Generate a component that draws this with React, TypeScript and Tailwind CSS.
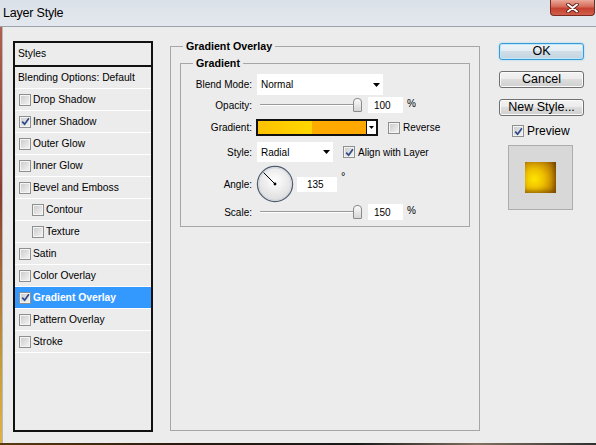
import React from 'react'
import clsx from 'clsx'

const styleRows = [
  { label: 'Drop Shadow' },
  { label: 'Inner Shadow', checked: true },
  { label: 'Outer Glow' },
  { label: 'Inner Glow' },
  { label: 'Bevel and Emboss' },
  { label: 'Contour', nested: true },
  { label: 'Texture', nested: true },
  { label: 'Satin' },
  { label: 'Color Overlay' },
  { label: 'Gradient Overlay', checked: true, active: true },
  { label: 'Pattern Overlay' },
  { label: 'Stroke' },
]

function Check({ checked = false }: { checked?: boolean }) {
  return (
    <span className="flex items-center justify-center w-[12px] h-[12px] shrink-0 border border-[#8e8f8f] bg-[linear-gradient(135deg,#c9c9c9,#f5f5f5)] shadow-[inset_0_0_0_1px_#f4f4f4]">
      {checked && (
        <svg width="9" height="9" viewBox="0 0 10 10">
          <path d="M1.3 5.2 L4 8 L8.8 1.4" stroke="#2f4a8a" strokeWidth="1.9" fill="none" />
        </svg>
      )}
    </span>
  )
}

function Arrow() {
  return (
    <svg width="7" height="4" viewBox="0 0 7 4">
      <path d="M0 0H7L3.5 4Z" fill="#000" />
    </svg>
  )
}

function Slider() {
  return (
    <div className="relative w-[105px] h-full">
      <div className="absolute left-[3px] right-[5px] top-[7px] h-[2px] border-t border-[#9a9a9a] border-b border-b-white" />
      <div className="absolute left-[96px] top-[1px] w-[9px] h-[14px] rounded-t-[4px] rounded-b-[1px] border border-[#8a8a8a] bg-[linear-gradient(#fbfbfb,#d6d6d6)]" />
    </div>
  )
}

function Label({ children }: { children: React.ReactNode }) {
  return <span className="w-[76px] shrink-0 text-right pr-[5px]">{children}</span>
}

function Button({ children, primary = false }: { children: React.ReactNode; primary?: boolean }) {
  return (
    <div
      className={clsx(
        'h-[17px] flex items-center justify-center rounded-[3px] border text-[12.5px] leading-none',
        primary
          ? 'border-[#3a9ad6] bg-[linear-gradient(#eef5f9,#e2ecf2_50%,#cfdde7_50%,#c3d5e1)] shadow-[0_0_2px_#7fd0f6,inset_0_0_0_1px_#bfe6fb]'
          : 'border-[#707070] bg-[linear-gradient(#f3f3f3,#ebebeb_50%,#dddddd_50%,#cfcfcf)] shadow-[inset_0_0_0_1px_#fbfbfb]'
      )}
    >
      {children}
    </div>
  )
}

export default function App() {
  return (
    <div className="w-[596px] h-[445px] flex flex-col overflow-hidden font-['Liberation_Sans',Arial,sans-serif] text-black">
      {/* title bar */}
      <div className="h-[26px] flex justify-between bg-[linear-gradient(#dbe1e8,#e3e8ee)] border-b border-[#9ca3ab] box-content">
        <span className="self-center pl-[3px] text-[12.5px] tracking-[-0.2px]">Layer Style</span>
        <div className="self-start mr-[1px] w-[45px] h-[16px] rounded-b-[4px] border border-t-0 border-[#7a2a20] bg-[linear-gradient(#e9a898,#d66a58_45%,#c5402f_55%,#d0604c)] flex items-center justify-center">
          <svg width="13" height="10" viewBox="0 0 13 10">
            <path d="M2 1.5 L11 8.5 M11 1.5 L2 8.5" stroke="#5a1c14" strokeWidth="3.6" strokeLinecap="round" />
            <path d="M2 1.5 L11 8.5 M11 1.5 L2 8.5" stroke="#ffffff" strokeWidth="2" strokeLinecap="round" />
          </svg>
        </div>
      </div>

      {/* body */}
      <div className="flex h-[416px]">
        <div className="w-[2px] bg-[linear-gradient(180deg,#b06050,#8a3a30_40%,#c49a3a_80%,#e2b244)]" />
        <div className="flex-1 bg-[#ececec] border-l border-[#b9b9b9] flex items-start pt-[14px]">
          {/* styles list */}
          <div className="ml-[10px] w-[140px] h-[391px] border-2 border-[#111] text-[10.3px]">
            <div className="h-[22px] flex items-center pl-[3px]">Styles</div>
            <div className="h-[2px] bg-[#111]" />
            <div className="h-[22px] flex items-center pl-[3px] border-b border-white">Blending Options: Default</div>
            {styleRows.map(s => (
              <div
                key={s.label}
                className={clsx(
                  'h-[22px] flex items-center gap-[2px] border-b border-white',
                  s.nested ? 'pl-[17px]' : 'pl-[4px]',
                  s.active && 'bg-[#3399ff] text-white font-bold'
                )}
              >
                <Check checked={s.checked} />
                <span>{s.label}</span>
              </div>
            ))}
          </div>

          {/* gradient overlay */}
          <fieldset className="ml-[17px] -mt-[1px] w-[310px] h-[391px] border border-[#a6a6a6] text-[10px]">
            <legend className="ml-[12px] px-[3px] font-bold text-[10.7px] leading-[13px]">Gradient Overlay</legend>
            <fieldset className="mx-[9px] mt-[3.5px] border border-[#a6a6a6] pb-[6px]">
              <legend className="ml-[12px] px-[3px] font-bold text-[10.7px] leading-[13px]">Gradient</legend>

              <div className="flex items-center h-[21px] mt-[4.5px]">
                <Label>Blend Mode:</Label>
                <div className="w-[126px] h-full bg-white flex items-center justify-between pl-[4px] pr-[3px]">
                  <span>Normal</span>
                  <Arrow />
                </div>
              </div>

              <div className="flex items-center h-[16px] mt-[2px]">
                <Label>Opacity:</Label>
                <Slider />
                <div className="ml-[6px] w-[35px] h-full bg-white flex items-center pl-[6px]">100</div>
                <span className="ml-[4px] self-start -mt-[1px]">%</span>
              </div>

              <div className="flex items-center h-[17px] mt-[6px]">
                <Label>Gradient:</Label>
                <div className="-ml-[1px] w-[122px] h-full border-2 border-[#111] flex bg-white">
                  <div className="flex-1 bg-[linear-gradient(90deg,#ffc200,#ffd700_50%,#ffab00_50%,#ffa700)]" />
                  <div className="w-[10px] border-l border-[#111] flex items-center justify-center">
                    <svg width="5" height="3" viewBox="0 0 5 3">
                      <path d="M0 0H5L2.5 3Z" fill="#000" />
                    </svg>
                  </div>
                </div>
                <span className="ml-[10px]">
                  <Check />
                </span>
                <span className="ml-[3px]">Reverse</span>
              </div>

              <div className="flex items-center h-[20px] mt-[6px]">
                <Label>Style:</Label>
                <div className="w-[76px] h-full bg-white flex items-center justify-between pl-[4px] pr-[3px]">
                  <span>Radial</span>
                  <Arrow />
                </div>
                <span className="ml-[10px]">
                  <Check checked />
                </span>
                <span className="ml-[3px]">Align with Layer</span>
              </div>

              <div className="flex items-center h-[38px] mt-[3px]">
                <Label>Angle:</Label>
                <svg className="-ml-[1px]" width="38" height="38" viewBox="0 0 38 38">
                  <defs>
                    <radialGradient id="dial" cx="50%" cy="40%" r="60%">
                      <stop offset="0" stopColor="#ffffff" />
                      <stop offset="1" stopColor="#dcdcdc" />
                    </radialGradient>
                  </defs>
                  <circle cx="19" cy="19" r="17.6" fill="url(#dial)" stroke="#4f5c70" strokeWidth="1.2" />
                  <circle cx="19" cy="19" r="16.3" fill="none" stroke="#d0d6de" strokeWidth="1" />
                  <line x1="19" y1="19" x2="7.6" y2="7.6" stroke="#000" strokeWidth="1" />
                  <circle cx="19" cy="19" r="1.4" fill="#000" />
                </svg>
                <div className="ml-[3px] w-[40px] h-[15px] bg-white flex items-center pl-[10px]">135</div>
                <span className="ml-[4px] self-start mt-[6px] text-[11px] leading-none">°</span>
              </div>

              <div className="flex items-center h-[16px] mt-[1px]">
                <Label>Scale:</Label>
                <Slider />
                <div className="ml-[6px] w-[35px] h-full bg-white flex items-center pl-[6px]">150</div>
                <span className="ml-[4px] self-start -mt-[1px]">%</span>
              </div>
            </fieldset>
          </fieldset>

          {/* buttons */}
          <div className="ml-[19px] w-[85px] flex flex-col">
            <div className="mt-[1.5px]">
              <Button primary>OK</Button>
            </div>
            <div className="mt-[11px]">
              <Button>Cancel</Button>
            </div>
            <div className="mt-[11px]">
              <Button>New Style...</Button>
            </div>
            <div className="mt-[9px] h-[13px] flex items-center pl-[13px] text-[12px]">
              <Check checked />
              <span className="ml-[3px]">Preview</span>
            </div>
            <div className="mt-[7.5px] ml-[9px] w-[65px] h-[65px] bg-[#d8d8d8] border border-[#adadad] flex items-center justify-center">
              <div className="w-[31px] h-[31px] bg-[radial-gradient(circle_at_30%_55%,#ffe600_0%,#eec000_35%,#c08400_70%,#7c5000_100%)] shadow-[inset_-2px_-2px_4px_rgba(90,50,0,0.5)]" />
            </div>
          </div>
        </div>
      </div>

      <div className="h-[2px] bg-[linear-gradient(90deg,#5a3a10,#2a1a10_30%,#1a1a1a_60%,#807060_80%,#303030)]" />
    </div>
  )
}
